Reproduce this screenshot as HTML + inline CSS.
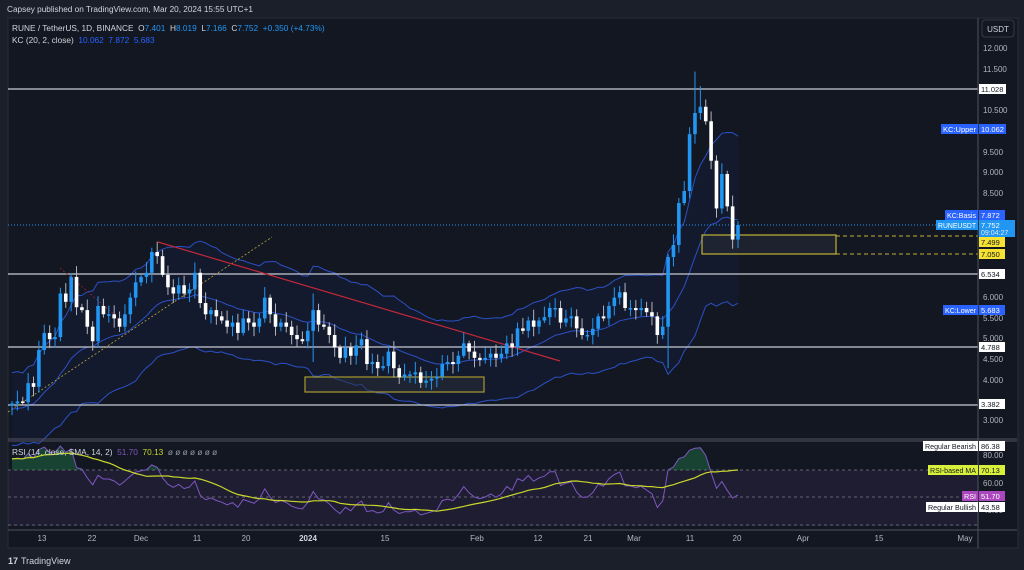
<!DOCTYPE html>
<html><head><meta charset="utf-8"><style>
html,body{margin:0;padding:0;background:#1b1f2a;width:1024px;height:570px;overflow:hidden;font-family:"Liberation Sans",sans-serif}
svg{position:absolute;left:0;top:0}
</style></head><body>
<svg id="s" width="1024" height="570" xmlns="http://www.w3.org/2000/svg" font-family="Liberation Sans, sans-serif">
<rect x="0" y="0" width="1024" height="570" fill="#1b1f2a"/>
<rect x="8" y="18" width="1010" height="530" fill="#131722" stroke="#2a2e39"/>
<rect x="8" y="470" width="970" height="56" fill="#7e57c2" fill-opacity="0.1"/>
<g id="bands"></g>
<g stroke="#c8cbd3" stroke-width="1.3">
<line x1="8" y1="89" x2="978" y2="89"/>
<line x1="8" y1="274" x2="978" y2="274"/>
<line x1="8" y1="347" x2="978" y2="347"/>
<line x1="8" y1="405" x2="978" y2="405"/>
</g>
<line x1="8" y1="225" x2="978" y2="225" stroke="#2196f3" stroke-dasharray="1,2"/>
<line x1="8" y1="412" x2="272" y2="237" stroke="#b8a936" stroke-width="0.8" stroke-dasharray="2,2"/>
<line x1="158" y1="242" x2="560" y2="361" stroke="#c2283a" stroke-width="1.2"/>
<line x1="60" y1="268" x2="115" y2="315" stroke="#a02030" stroke-width="0.8" stroke-dasharray="2,2"/>
<rect x="305" y="377" width="179" height="15" fill="#2a2e39" fill-opacity="0.5" stroke="#a89a2e" stroke-width="1.2"/>
<rect x="702" y="235" width="134" height="19" fill="#2a2e39" fill-opacity="0.5" stroke="#c2b236" stroke-width="1.2"/>
<line x1="836" y1="236" x2="978" y2="236" stroke="#c2b236" stroke-dasharray="4,3"/>
<line x1="836" y1="254" x2="978" y2="254" stroke="#c2b236" stroke-dasharray="4,3"/>
<g id="candles"></g>
<line x1="8" y1="439" x2="1017" y2="439" stroke="#50535e"/>
<line x1="8" y1="441" x2="1017" y2="441" stroke="#50535e"/>
<g stroke="#787b86" stroke-dasharray="3,3" stroke-width="0.8">
<line x1="8" y1="470" x2="978" y2="470"/><line x1="8" y1="497" x2="978" y2="497"/><line x1="8" y1="525" x2="978" y2="525"/>
</g>
<g id="rsi"></g>
<line x1="978" y1="18" x2="978" y2="548" stroke="#50535e"/>
<line x1="8" y1="530" x2="1017" y2="530" stroke="#50535e"/>
<rect x="982" y="20" width="32" height="17" rx="3" fill="none" stroke="#363a45"/>
<text x="998" y="32" font-size="8" fill="#d1d4dc" text-anchor="middle">USDT</text>
<g font-size="8" fill="#b2b5be">
<text x="983" y="51">12.000</text><text x="983" y="72">11.500</text><text x="983" y="113">10.500</text>
<text x="983" y="155">9.500</text><text x="983" y="175">9.000</text><text x="983" y="196">8.500</text>
<text x="983" y="300">6.000</text><text x="983" y="321">5.500</text><text x="983" y="341">5.000</text>
<text x="983" y="362">4.500</text><text x="983" y="383">4.000</text><text x="983" y="423">3.000</text>
<text x="983" y="458">80.00</text><text x="983" y="486">60.00</text><text x="983" y="513">40.00</text>
</g>
<g font-size="7.5">
<rect x="979" y="84" width="27" height="10" fill="#fff"/><text x="981" y="92" fill="#131722">11.028</text>
<rect x="979" y="124" width="27" height="10" fill="#2962ff"/><text x="981" y="132" fill="#fff">10.062</text>
<rect x="941" y="124" width="37" height="10" fill="#2962ff"/><text x="943" y="132" fill="#fff" textLength="33" lengthAdjust="spacingAndGlyphs">KC:Upper</text>
<rect x="979" y="210" width="26" height="10" fill="#2962ff"/><text x="981" y="218" fill="#fff">7.872</text>
<rect x="945" y="210" width="33" height="10" fill="#2962ff"/><text x="947" y="218" fill="#fff" textLength="29" lengthAdjust="spacingAndGlyphs">KC:Basis</text>
<rect x="979" y="220" width="36" height="17" fill="#2196f3"/><text x="981" y="228" fill="#fff">7.752</text><text x="981" y="235" fill="#e0e8f5" font-size="7">09:04:27</text>
<rect x="936" y="220" width="42" height="10" fill="#2196f3"/><text x="938" y="228" fill="#fff" textLength="38" lengthAdjust="spacingAndGlyphs">RUNEUSDT</text>
<rect x="979" y="237" width="26" height="10" fill="#f5e232"/><text x="981" y="245" fill="#131722">7.499</text>
<rect x="979" y="249" width="26" height="10" fill="#f5e232"/><text x="981" y="257" fill="#131722">7.050</text>
<rect x="979" y="269" width="26" height="10" fill="#fff"/><text x="981" y="277" fill="#131722">6.534</text>
<rect x="979" y="399" width="26" height="10" fill="#fff"/><text x="981" y="407" fill="#131722">3.382</text>
<rect x="979" y="342" width="26" height="10" fill="#fff"/><text x="981" y="350" fill="#131722">4.788</text>
<rect x="979" y="305" width="26" height="10" fill="#2962ff"/><text x="981" y="313" fill="#fff">5.683</text>
<rect x="943" y="305" width="35" height="10" fill="#2962ff"/><text x="945" y="313" fill="#fff" textLength="31" lengthAdjust="spacingAndGlyphs">KC:Lower</text>
<rect x="979" y="441" width="26" height="10" fill="#fff"/><text x="981" y="449" fill="#131722">86.38</text>
<rect x="923" y="441" width="55" height="10" fill="#fff"/><text x="925" y="449" fill="#131722" textLength="51" lengthAdjust="spacingAndGlyphs">Regular Bearish</text>
<rect x="979" y="465" width="26" height="10" fill="#d9f03a"/><text x="981" y="473" fill="#131722">70.13</text>
<rect x="928" y="465" width="50" height="10" fill="#d9f03a"/><text x="930" y="473" fill="#131722" textLength="46" lengthAdjust="spacingAndGlyphs">RSI-based MA</text>
<rect x="979" y="491" width="26" height="10" fill="#ab47bc"/><text x="981" y="499" fill="#fff">51.70</text>
<rect x="962" y="491" width="16" height="10" fill="#ab47bc"/><text x="964" y="499" fill="#fff" textLength="12" lengthAdjust="spacingAndGlyphs">RSI</text>
<rect x="979" y="502" width="26" height="10" fill="#fff"/><text x="981" y="510" fill="#131722">43.58</text>
<rect x="926" y="502" width="52" height="10" fill="#fff"/><text x="928" y="510" fill="#131722" textLength="48" lengthAdjust="spacingAndGlyphs">Regular Bullish</text>
</g>
<g font-size="8" fill="#b2b5be" text-anchor="middle">
<text x="42" y="541">13</text><text x="92" y="541">22</text><text x="141" y="541">Dec</text><text x="197" y="541">11</text>
<text x="246" y="541">20</text><text x="308" y="541" font-weight="bold" fill="#d1d4dc">2024</text><text x="385" y="541">15</text>
<text x="477" y="541">Feb</text><text x="538" y="541">12</text><text x="588" y="541">21</text><text x="634" y="541">Mar</text>
<text x="690" y="541">11</text><text x="737" y="541">20</text><text x="803" y="541">Apr</text><text x="879" y="541">15</text><text x="965" y="541">May</text>
</g>
<text x="7" y="12" font-size="8.6" fill="#d1d4dc" textLength="246" lengthAdjust="spacingAndGlyphs">Capsey published on TradingView.com, Mar 20, 2024 15:55 UTC+1</text>
<text x="12" y="31" font-size="8.3" fill="#d1d4dc" xml:space="preserve">RUNE / TetherUS, 1D, BINANCE  O<tspan fill="#2196f3">7.401</tspan>  H<tspan fill="#2196f3">8.019</tspan>  L<tspan fill="#2196f3">7.166</tspan>  C<tspan fill="#2196f3">7.752</tspan>  <tspan fill="#2196f3">+0.350 (+4.73%)</tspan></text>
<text x="12" y="43" font-size="8.3" fill="#d1d4dc" xml:space="preserve">KC (20, 2, close)  <tspan fill="#2962ff">10.062</tspan>  <tspan fill="#2962ff">7.872</tspan>  <tspan fill="#2962ff">5.683</tspan></text>
<text x="12" y="455" font-size="8.3" fill="#d1d4dc" xml:space="preserve">RSI (14, close, SMA, 14, 2)  <tspan fill="#7e57c2">51.70</tspan>  <tspan fill="#c9d62a">70.13</tspan>  <tspan fill="#9598a1">ø ø ø ø ø ø ø</tspan></text>
<text x="8" y="564" font-size="9" font-weight="bold" fill="#d1d4dc">17</text>
<text x="21" y="564" font-size="9" fill="#d1d4dc">TradingView</text>
</svg>
<script>
var C=[3.45,3.5,3.48,3.94,3.85,4.74,5.15,5.0,5.05,6.1,5.9,6.5,5.77,5.7,5.3,4.95,5.8,5.6,5.6,5.5,5.3,5.6,6.0,6.37,6.5,6.6,7.1,7.0,6.55,6.25,6.1,6.3,6.1,6.2,6.6,5.87,5.6,5.7,5.55,5.45,5.3,5.4,5.15,5.5,5.4,5.3,5.5,6.0,5.6,5.3,5.4,5.3,5.1,5.0,4.95,5.2,5.7,5.35,5.3,5.1,4.8,4.55,4.8,4.6,4.85,5.0,4.4,4.45,4.3,4.35,4.7,4.3,4.08,4.15,4.15,4.2,3.95,4.0,4.05,4.1,4.4,4.45,4.4,4.6,4.9,4.7,4.55,4.5,4.55,4.65,4.55,4.65,4.9,4.8,5.26,5.2,5.45,5.3,5.45,5.53,5.75,5.75,5.4,5.5,5.55,5.26,5.1,5.1,5.25,5.55,5.5,5.8,6.0,6.13,5.75,5.75,5.7,5.75,5.65,5.55,5.1,5.3,6.98,7.27,8.28,8.57,9.94,10.45,10.6,10.25,9.3,8.15,8.98,8.2,7.4,7.75];
var NS="http://www.w3.org/2000/svg",n=C.length,x0=12,x1=738,dx=(x1-x0)/(n-1);
function Y(p){return 89+(11.028-p)*41.5}
function el(t,a,g){var e=document.createElementNS(NS,t);for(var k in a)e.setAttribute(k,a[k]);document.getElementById(g).appendChild(e);return e}
var H=[],L=[],O=[];
for(var i=0;i<n;i++){var o=i?C[i-1]:3.4;O.push(o);var hi=Math.max(o,C[i])+0.06+0.2*Math.abs(Math.sin(i*1.7)),lo=Math.min(o,C[i])-0.05-0.18*Math.abs(Math.cos(i*2.3));H.push(hi);L.push(lo);}
H[n-9]=11.45;H[n-8]=11.1;L[n-14]=4.3;L[56]=4.45;H[56]=6.1;
var b=3.3,r=0.45,B=[],U=[],Lo=[],a=2/21;
for(i=0;i<n;i++){b=b+a*(C[i]-b);var tr=Math.max(H[i]-L[i],Math.abs(H[i]-(i?C[i-1]:C[i])),Math.abs(L[i]-(i?C[i-1]:C[i])));r=r+a*(tr-r);B.push(b);U.push(b+2*r);Lo.push(b-2*r);}
var pu="",pl="",pb="";
for(i=0;i<n;i++){var x=(x0+i*dx).toFixed(1);pu+=(i?"L":"M")+x+","+Y(U[i]).toFixed(1);pb+=(i?"L":"M")+x+","+Y(B[i]).toFixed(1);}
for(i=n-1;i>=0;i--){pl+="L"+(x0+i*dx).toFixed(1)+","+Y(Lo[i]).toFixed(1);}
el("path",{d:pu+pl+"Z",fill:"#2962ff","fill-opacity":"0.05"},"bands");
var bs={fill:"none",stroke:"#2f57d6","stroke-width":"1","stroke-opacity":"0.9"};
function cp(o,d){var r={};for(var k in o)r[k]=o[k];r.d=d;return r}
el("path",cp(bs,pu),"bands");el("path",cp(bs,pb),"bands");el("path",cp(bs,"M"+pl.slice(1)),"bands");
for(i=0;i<n;i++){var x=x0+i*dx,up=C[i]>=O[i],col=up?"#2196f3":"#ffffff";
el("line",{x1:x,x2:x,y1:Y(H[i]),y2:Y(L[i]),stroke:up?"#2196f3":"#b2b5be","stroke-width":"1"},"candles");
var t=Y(Math.max(O[i],C[i])),h=Math.max(1.5,Y(Math.min(O[i],C[i]))-t);
el("rect",{x:x-1.8,y:t,width:3.6,height:h,fill:col},"candles");}
var ag=0.14,al=0.04,R=[];
for(i=0;i<n;i++){var d=i?C[i]-C[i-1]:0.05;ag=(ag*13+Math.max(d,0))/14;al=(al*13+Math.max(-d,0))/14;R.push(100-100/(1+ag/al));}
var M=[];for(i=0;i<n;i++){var s=0,c=0;for(var j=Math.max(0,i-13);j<=i;j++){s+=R[j];c++}M.push(s/c);}
function RY(v){return 497-(v-50)*1.35}
var pr="",pm="";for(i=0;i<n;i++){var x=(x0+i*dx).toFixed(1);pr+=(i?"L":"M")+x+","+RY(R[i]).toFixed(1);pm+=(i?"L":"M")+x+","+RY(M[i]).toFixed(1);}
var ob="";for(i=0;i<n;i++){var x=(x0+i*dx).toFixed(1);ob+=(i?"L":"M")+x+","+Math.min(RY(R[i]),470).toFixed(1);}
ob+="L"+x1+",470L"+x0+",470Z";
el("path",{d:ob,fill:"#26a65b","fill-opacity":"0.3"},"rsi");
el("path",{d:pr,fill:"none",stroke:"#7e57c2","stroke-width":"1"},"rsi");
el("path",{d:pm,fill:"none",stroke:"#c9d62a","stroke-width":"1.2"},"rsi");
</script>
</body></html>
